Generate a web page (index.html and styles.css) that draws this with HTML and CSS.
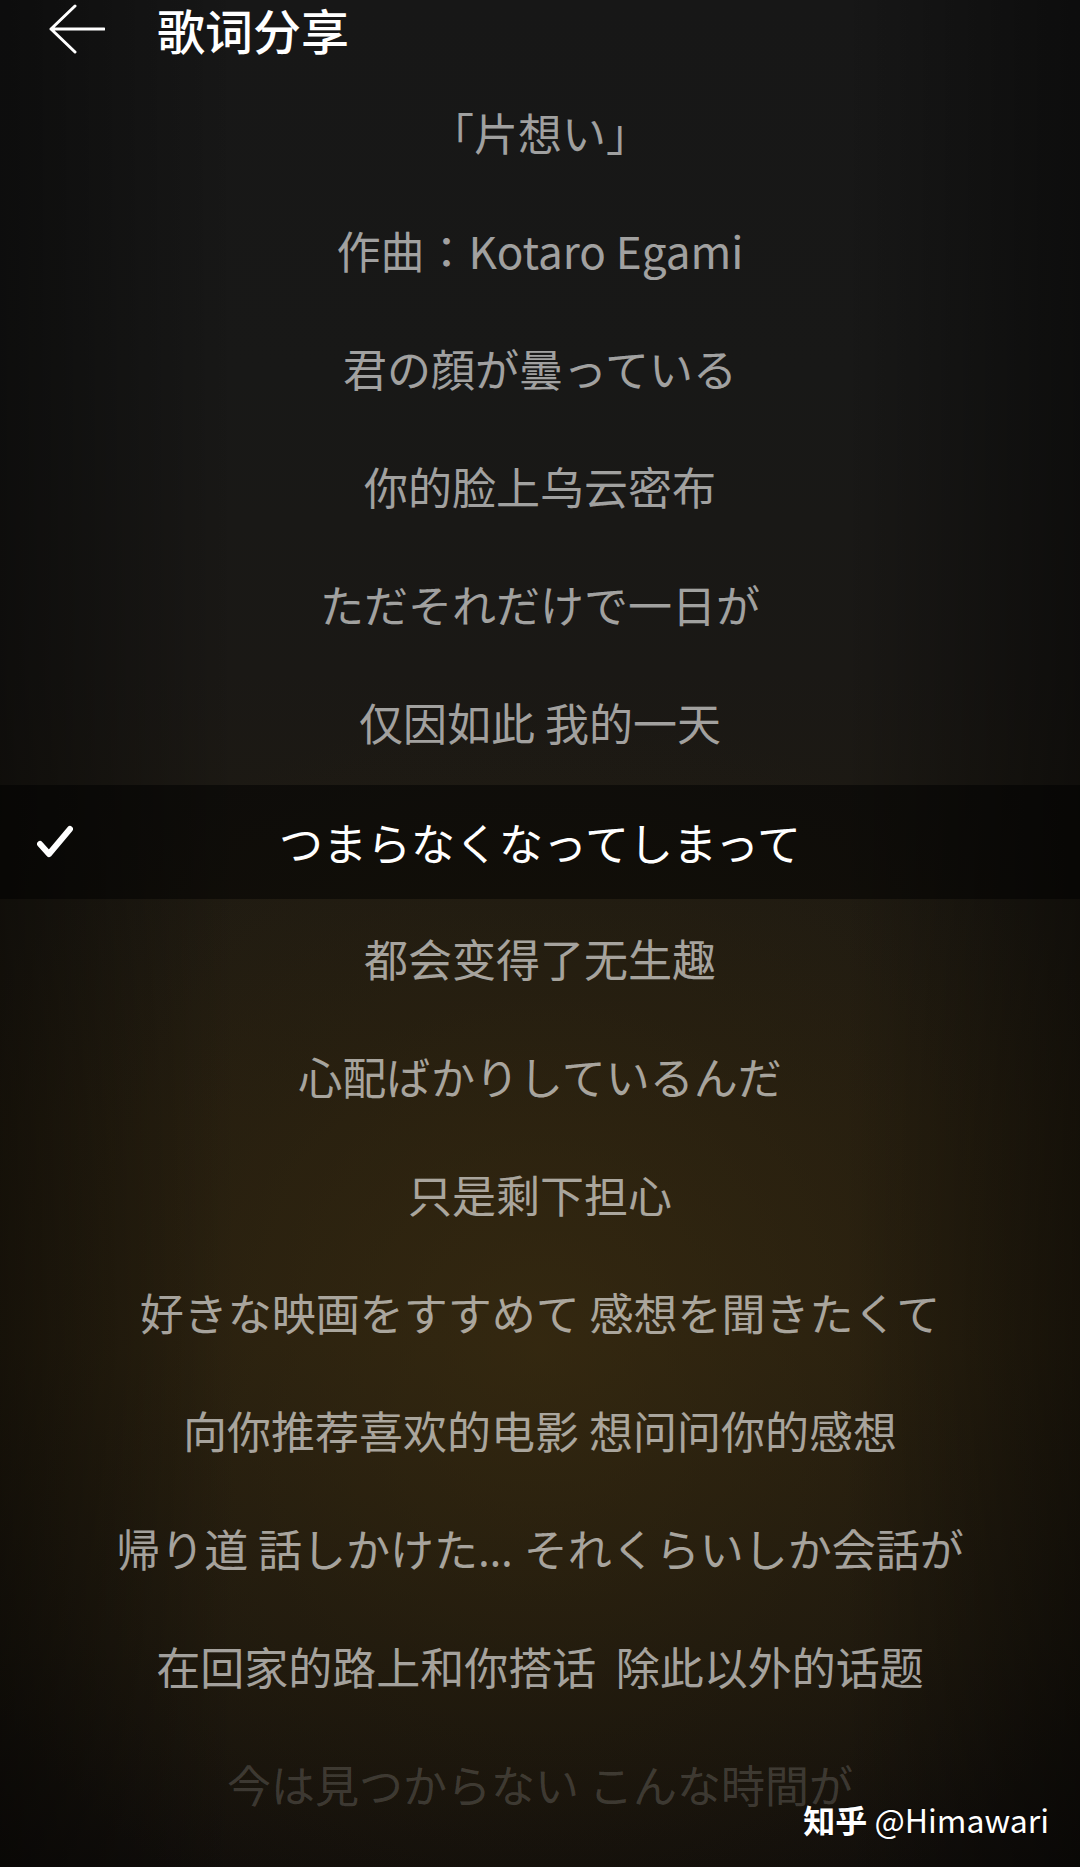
FILE: index.html
```html
<!DOCTYPE html>
<html lang="zh-CN">
<head>
<meta charset="utf-8">
<title>歌词分享</title>
<link rel="stylesheet" href="styles.css">
</head>
<body>
<div class="page">
  <header class="topbar">
    <svg class="back" width="56" height="50" viewBox="0 0 56 50" aria-hidden="true">
      <path d="M26 2 L2 25 L26 48 M2 25 L55 25" fill="none" stroke="#ffffff" stroke-width="3" stroke-linecap="round" stroke-linejoin="round"/>
    </svg>
    <h1 class="title">歌词分享</h1>
  </header>
  <ul class="lyrics">
    <li class="line ja" lang="ja">「片想い」</li>
    <li class="line ja" lang="ja">作曲：Kotaro Egami</li>
    <li class="line ja" lang="ja">君の顔が曇っている</li>
    <li class="line zh">你的脸上乌云密布</li>
    <li class="line ja" lang="ja">ただそれだけで一日が</li>
    <li class="line zh">仅因如此 我的一天</li>
    <li class="line ja current" lang="ja">
      <span class="tick"><svg width="36" height="34" viewBox="0 0 36 34" aria-hidden="true"><path d="M3 19 L12 29 L33 4" fill="none" stroke="#ffffff" stroke-width="6" stroke-linecap="round" stroke-linejoin="round"/></svg></span>
      <span class="text">つまらなくなってしまって</span>
      <span class="spacer"></span>
    </li>
    <li class="line zh">都会变得了无生趣</li>
    <li class="line ja" lang="ja">心配ばかりしているんだ</li>
    <li class="line zh">只是剩下担心</li>
    <li class="line ja" lang="ja">好きな映画をすすめて 感想を聞きたくて</li>
    <li class="line zh">向你推荐喜欢的电影 想问问你的感想</li>
    <li class="line ja" lang="ja">帰り道 話しかけた<span class="ell">…</span> それくらいしか会話が</li>
    <li class="line zh">在回家的路上和你搭话  除此以外的话题</li>
    <li class="line ja faded" lang="ja">今は見つからない こんな時間が</li>
  </ul>
  <div class="watermark"><span class="brand">知乎</span> @Himawari</div>
</div>
</body>
</html>
```
FILE: styles.css
```css
html, body {
  margin: 0;
  padding: 0;
  background: #0c0c0c;
}

.page {
  position: relative;
  width: 1080px;
  height: 1867px;
  overflow: hidden;
  background:
    linear-gradient(to right, rgba(0,0,0,0.45) 0%, rgba(0,0,0,0) 22%, rgba(0,0,0,0) 78%, rgba(0,0,0,0.45) 100%),
    radial-gradient(ellipse 62% 34% at 50% 72%, rgba(62,47,16,0.55) 0%, rgba(50,38,14,0.3) 55%, rgba(0,0,0,0) 100%),
    linear-gradient(to bottom, #171717 0%, #181817 20%, #1a1815 36%, #1e1a12 48%, #241d10 60%, #271f10 72%, #1c170e 88%, #110e0b 100%);
  font-family: "Noto Sans CJK SC", "Noto Sans CJK JP", sans-serif;
}

.topbar {
  display: flex;
  align-items: center;
  height: 58px;
  padding-left: 49px;
  gap: 52px;
}

.back {
  display: block;
  flex: none;
}

.title {
  margin: 0;
  font-size: 48px;
  font-weight: 500;
  color: #ffffff;
  line-height: 48px;
  letter-spacing: 0;
}

.lyrics {
  list-style: none;
  margin: 0;
  padding: 15px 0 0;
}

.line {
  height: 118px;
  line-height: 118px;
  text-align: center;
  font-size: 44px;
  font-weight: 400;
  color: rgba(255,255,255,0.6);
  white-space: pre;
}

.ja {
  font-family: "Noto Sans CJK JP", "Noto Sans CJK SC", sans-serif;
}

.zh {
  font-family: "Noto Sans CJK SC", "Noto Sans CJK JP", sans-serif;
}

.ell {
  font-family: "Noto Sans", sans-serif;
  letter-spacing: 1px;
}

.current {
  display: grid;
  grid-template-columns: 1fr auto 1fr;
  align-items: center;
  height: 114px;
  line-height: 114px;
  margin: 4px 0 0;
  background: rgba(0,0,0,0.5);
  color: #ffffff;
}

.tick {
  justify-self: start;
  padding-left: 37px;
  display: flex;
  align-items: center;
  height: 114px;
}

.tick svg {
  display: block;
}

.faded {
  color: rgba(255,255,255,0.17);
}

.watermark {
  position: absolute;
  right: 31px;
  bottom: 28px;
  font-family: "Noto Sans CJK SC", sans-serif;
  font-size: 32px;
  line-height: 40px;
  color: #ffffff;
  text-shadow: 0 0 2px rgba(0,0,0,0.6);
}

.brand {
  font-weight: 700;
}
```
